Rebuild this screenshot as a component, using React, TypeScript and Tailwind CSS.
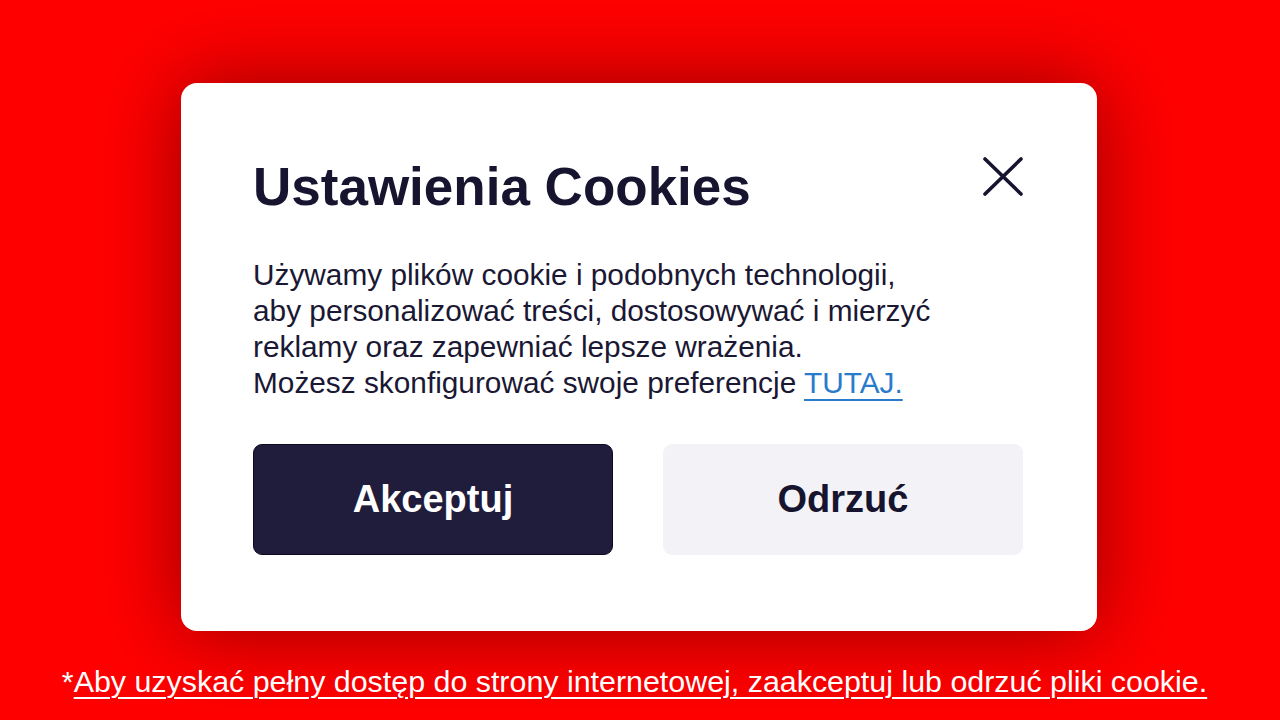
import React from "react";

export default function App() {
  return (
    <div className="w-[1280px] h-[720px] bg-[#ff0000] flex flex-col items-center pt-[83px] overflow-hidden font-['Liberation_Sans',Arial,sans-serif]">
      <div className="w-[916px] h-[548px] mr-[2px] bg-white rounded-[16px] shadow-[0_0_80px_rgba(60,0,0,0.55)] pl-[72px] pr-[74px] pt-[77px] flex flex-col">
        <div className="flex justify-between items-start">
          <h1 className="text-[53px] leading-[53px] font-bold text-[#16142f]">
            Ustawienia Cookies
          </h1>
          <button className="w-[40px] h-[40px] mt-[-3px]" aria-label="Zamknij">
            <svg viewBox="0 0 40 40" width="40" height="40">
              <path
                d="M2 2 L38 37 M38 2 L2 37"
                stroke="#16142f"
                strokeWidth="3.6"
                strokeLinecap="round"
                fill="none"
              />
            </svg>
          </button>
        </div>
        <p className="mt-[44px] text-[29.8px] leading-[36px] text-[#1a1833]">
          Używamy plików cookie i podobnych technologii,
          <br />
          aby personalizować treści, dostosowywać i mierzyć
          <br />
          reklamy oraz zapewniać lepsze wrażenia.
          <br />
          Możesz skonfigurować swoje preferencje{" "}
          <a className="text-[#2a7bc9] underline decoration-2 underline-offset-[6px]">
            TUTAJ.
          </a>
        </p>
        <div className="mt-[43px] flex gap-[50px]">
          <button className="w-[360px] h-[111px] rounded-[9px] bg-[#201c3c] border border-[#0c0a1e] text-white text-[38px] font-bold">
            Akceptuj
          </button>
          <button className="w-[360px] h-[111px] rounded-[9px] bg-[#f3f3f7] text-[#16142f] text-[38px] font-bold">
            Odrzuć
          </button>
        </div>
      </div>
      <p className="mt-[34px] mr-[11px] text-[30.4px] leading-[32px] text-white whitespace-nowrap">
        *
        <span className="underline decoration-2 underline-offset-[5px]">
          Aby uzyskać pełny dostęp do strony internetowej, zaakceptuj lub odrzuć pliki cookie.
        </span>
      </p>
    </div>
  );
}
